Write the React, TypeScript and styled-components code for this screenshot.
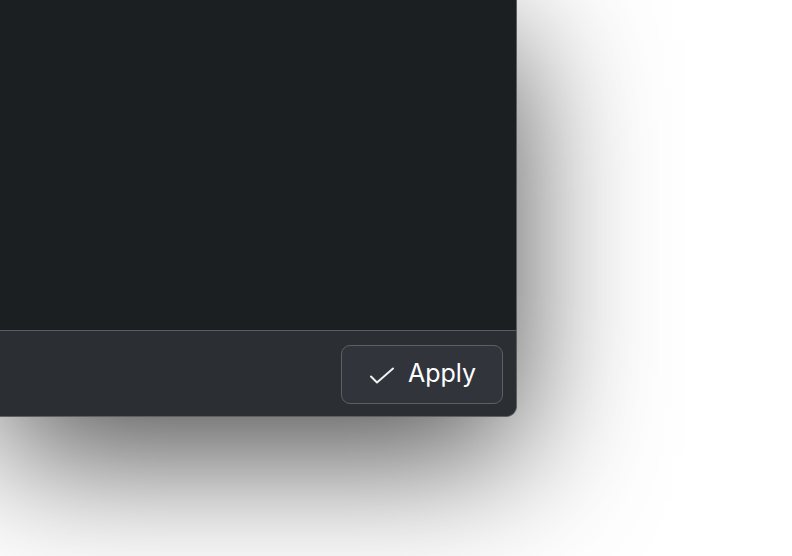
import React from "react";
import styled, { createGlobalStyle } from "styled-components";

const GlobalStyle = createGlobalStyle`
  html, body {
    margin: 0;
    padding: 0;
    background: #ffffff;
    overflow: hidden;
  }
  body {
    font-family: Inter, "Noto Sans", "Liberation Sans", sans-serif;
  }
`;

const Desktop = styled.div`
  width: 792px;
  height: 556px;
  display: flex;
  align-items: flex-start;
  justify-content: flex-start;
`;

const Window = styled.div`
  width: 517px;
  height: 417px;
  box-sizing: border-box;
  display: flex;
  flex-direction: column;
  background: #1c1f22;
  border-right: 1px solid #5c6064;
  border-bottom: 1px solid #5c6064;
  border-bottom-right-radius: 11px;
  box-shadow: 0 40px 140px rgba(0, 0, 0, 0.7);
  overflow: hidden;
`;

const Content = styled.div`
  flex: 1;
  background: #1c1f22;
`;

const Footer = styled.div`
  height: 86px;
  box-sizing: border-box;
  border-top: 1px solid #595d61;
  background: #2b2f33;
  display: flex;
  align-items: flex-start;
  justify-content: flex-end;
  padding: 14px 13px 0 0;
`;

const Button = styled.button`
  width: 162px;
  height: 59px;
  box-sizing: border-box;
  display: flex;
  align-items: center;
  justify-content: center;
  gap: 14px;
  padding: 0 0 0 2px;
  background: #31353b;
  border: 1px solid #5b6065;
  border-radius: 9px;
  color: #ffffff;
  font-family: Inter, "Noto Sans", "Liberation Sans", sans-serif;
  font-size: 25px;
  font-weight: 400;
  letter-spacing: 0;
  cursor: pointer;
`;

const CheckIcon = styled.svg`
  width: 24px;
  height: 18px;
  flex: none;
  margin-top: 2px;
`;

const Label = styled.span`
  line-height: 1;
  margin-top: -2px;
`;

export default function App() {
  return (
    <>
      <GlobalStyle />
      <Desktop>
        <Window>
          <Content />
          <Footer>
            <Button>
              <CheckIcon viewBox="0 0 24 18" fill="none">
                <path
                  d="M1 9.5 L7 15.5 L23 1.5"
                  stroke="#f0f0f0"
                  strokeWidth="2"
                  strokeLinecap="round"
                  strokeLinejoin="round"
                />
              </CheckIcon>
              <Label>Apply</Label>
            </Button>
          </Footer>
        </Window>
      </Desktop>
    </>
  );
}
